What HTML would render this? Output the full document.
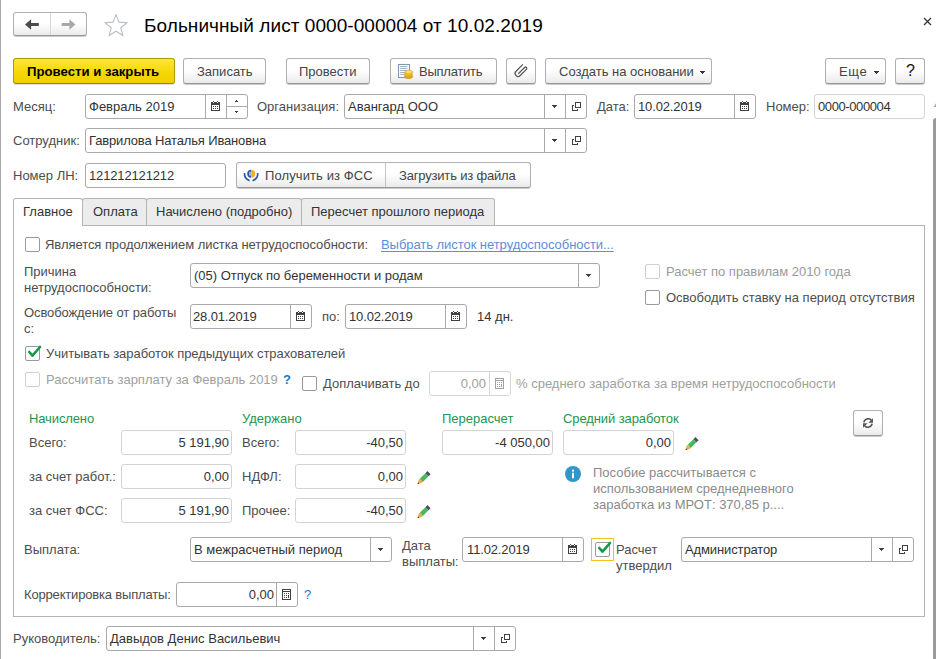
<!DOCTYPE html><html><head><meta charset="utf-8"><style>
html,body{margin:0;padding:0;width:936px;height:659px;overflow:hidden;background:#fff;position:relative}
.t{position:absolute;white-space:pre;font-family:"Liberation Sans",sans-serif}
.b{position:absolute}
</style></head><body>
<div class="b" style="left:0px;top:0px;width:1px;height:659px;background:#a8a8a8"></div>
<div class="b" style="left:933px;top:118px;width:4px;height:545px;background:#9b9b9b;border-radius:3px 0 0 0"></div>
<svg class="b" style="left:930px;top:100px" width="6" height="10"><path d="M6 3.3L3.6 7H6Z" fill="#a8a8a8"/></svg>
<div class="b" style="left:13px;top:12px;width:74px;height:24px;border:1px solid #b0b0b0;border-bottom-color:#969696;border-radius:3px;background:linear-gradient(#fff 45%,#ebebeb);box-shadow:0 1px 0 rgba(0,0,0,0.2);box-sizing:border-box;"></div>
<div class="b" style="left:50px;top:13px;width:1px;height:22px;background:#d6d6d6"></div>
<svg class="b" style="left:25px;top:18px" width="16" height="13" viewBox="0 0 16 13"><path d="M0 6.5L6.1 1.2V5H13.8V8H6.1V11.8Z" fill="#4a4a4a"/></svg>
<svg class="b" style="left:61px;top:18px" width="16" height="13" viewBox="0 0 16 13"><path d="M14.5 6.5L8.4 1.2V5H0.7V8H8.4V11.8Z" fill="#a8a8a8"/></svg>
<svg class="b" style="left:104px;top:14px" width="25" height="24" viewBox="0 0 25 24"><polygon points="12.00,0.60 14.94,8.15 23.03,8.62 16.76,13.75 18.82,21.58 12.00,17.20 5.18,21.58 7.24,13.75 0.97,8.62 9.06,8.15" fill="none" stroke="#b8bec8" stroke-width="1.1" stroke-linejoin="miter"/></svg>
<div class="t" style="left:144px;top:15px;color:#000;font-size:19px;font-weight:normal;line-height:22px;letter-spacing:0.06px">Больничный лист 0000-000004 от 10.02.2019</div>
<svg class="b" style="left:923px;top:17px" width="10" height="10" viewBox="0 0 10 10"><path d="M1 1L8 8M8 1L1 8" stroke="#333" stroke-width="1.25"/></svg>
<div class="b" style="left:13px;top:58px;width:162px;height:26px;border:1px solid #b09a00;border-bottom-color:#9c8600;border-radius:3px;background:linear-gradient(#ffe63c,#f5d600 60%,#f0d000);box-sizing:border-box;box-shadow:0 1px 0 rgba(0,0,0,0.12)"></div>
<div class="t" style="left:27px;top:64px;color:#000;font-size:13px;font-weight:bold;line-height:16px;font-size:13.2px">Провести и закрыть</div>
<div class="b" style="left:183px;top:58px;width:83px;height:26px;border:1px solid #b0b0b0;border-bottom-color:#969696;border-radius:3px;background:linear-gradient(#fff 45%,#ebebeb);box-shadow:0 1px 0 rgba(0,0,0,0.2);box-sizing:border-box;"></div>
<div class="t" style="left:197px;top:64px;color:#444;font-size:13px;font-weight:normal;line-height:16px;">Записать</div>
<div class="b" style="left:286px;top:58px;width:84px;height:26px;border:1px solid #b0b0b0;border-bottom-color:#969696;border-radius:3px;background:linear-gradient(#fff 45%,#ebebeb);box-shadow:0 1px 0 rgba(0,0,0,0.2);box-sizing:border-box;"></div>
<div class="t" style="left:299px;top:64px;color:#444;font-size:13px;font-weight:normal;line-height:16px;">Провести</div>
<div class="b" style="left:390px;top:58px;width:107px;height:26px;border:1px solid #b0b0b0;border-bottom-color:#969696;border-radius:3px;background:linear-gradient(#fff 45%,#ebebeb);box-shadow:0 1px 0 rgba(0,0,0,0.2);box-sizing:border-box;"></div>
<svg class="b" style="left:392px;top:58px" width="28" height="26" viewBox="0 0 28 26"><rect x="6.5" y="6.5" width="11" height="13" fill="#fff" stroke="#8298b2" stroke-width="1.1"/><path d="M8 8.5h7.5M8 10.5h7.5M8 12.5h7.5M8 14.5h5M8 16.5h4" stroke="#9aabbf" stroke-width="0.9"/><ellipse cx="16.6" cy="18.6" rx="4.1" ry="2" fill="#e2a51a" stroke="#c4880c" stroke-width="0.5"/><ellipse cx="16.2" cy="16.4" rx="4.1" ry="2" fill="#efbb2c" stroke="#c99212" stroke-width="0.5"/><ellipse cx="16.8" cy="14.2" rx="4.1" ry="2" fill="#f5c93c" stroke="#cf9a18" stroke-width="0.5"/><ellipse cx="16.6" cy="13.8" rx="3" ry="1.1" fill="#ffe27a"/></svg>
<div class="t" style="left:419px;top:64px;color:#444;font-size:13px;font-weight:normal;line-height:16px;;letter-spacing:-0.25px">Выплатить</div>
<div class="b" style="left:506px;top:58px;width:30px;height:26px;border:1px solid #b0b0b0;border-bottom-color:#969696;border-radius:3px;background:linear-gradient(#fff 45%,#ebebeb);box-shadow:0 1px 0 rgba(0,0,0,0.2);box-sizing:border-box;"></div>
<svg class="b" style="left:510px;top:60px" width="22" height="22" viewBox="0 0 22 22"><g transform="translate(10.75 10.75) rotate(-45)"><path d="M6 -3H-3.7A3 3 0 0 0 -3.7 3H5A1.3 1.3 0 0 0 5 0.4H-3.9" fill="none" stroke="#5a5a5a" stroke-width="1.25"/></g></svg>
<div class="b" style="left:545px;top:58px;width:167px;height:26px;border:1px solid #b0b0b0;border-bottom-color:#969696;border-radius:3px;background:linear-gradient(#fff 45%,#ebebeb);box-shadow:0 1px 0 rgba(0,0,0,0.2);box-sizing:border-box;"></div>
<div class="t" style="left:559px;top:64px;color:#444;font-size:13px;font-weight:normal;line-height:16px;">Создать на основании</div>
<svg class="b" style="left:700px;top:71px" width="5" height="3" shape-rendering="crispEdges"><rect x="0" y="0" width="5" height="1" fill="#333"/><rect x="1" y="1" width="3" height="1" fill="#333"/><rect x="2" y="2" width="1" height="1" fill="#333"/></svg>
<div class="b" style="left:825px;top:58px;width:61px;height:26px;border:1px solid #b0b0b0;border-bottom-color:#969696;border-radius:3px;background:linear-gradient(#fff 45%,#ebebeb);box-shadow:0 1px 0 rgba(0,0,0,0.2);box-sizing:border-box;"></div>
<div class="t" style="left:839px;top:64px;color:#444;font-size:13px;font-weight:normal;line-height:16px;;letter-spacing:0.6px">Еще</div>
<svg class="b" style="left:874px;top:71px" width="5" height="3" shape-rendering="crispEdges"><rect x="0" y="0" width="5" height="1" fill="#333"/><rect x="1" y="1" width="3" height="1" fill="#333"/><rect x="2" y="2" width="1" height="1" fill="#333"/></svg>
<div class="b" style="left:895px;top:58px;width:30px;height:26px;border:1px solid #b0b0b0;border-bottom-color:#969696;border-radius:3px;background:linear-gradient(#fff 45%,#ebebeb);box-shadow:0 1px 0 rgba(0,0,0,0.2);box-sizing:border-box;"></div>
<div class="t" style="left:906px;top:63px;color:#111;font-size:13px;font-weight:normal;line-height:16px;font-size:16px">?</div>
<div class="t" style="left:13px;top:99px;color:#4d4d4d;font-size:13px;font-weight:normal;line-height:16px;">Месяц:</div>
<div class="b" style="left:85px;top:94px;width:163px;height:25px;border:1px solid #a9a9a9;border-radius:3px;background:#fff;box-sizing:border-box"></div>
<div class="b" style="left:205px;top:95px;width:1px;height:23px;background:#a9a9a9"></div>
<div class="b" style="left:226px;top:95px;width:1px;height:23px;background:#a9a9a9"></div>
<div class="b" style="left:227px;top:106px;width:20px;height:1px;background:#a9a9a9"></div>
<div class="t" style="left:89px;top:99px;color:#333;font-size:13px;font-weight:normal;line-height:16px;">Февраль 2019</div>
<svg class="b" style="left:211px;top:101px" width="9" height="10" shape-rendering="crispEdges"><rect x="2" y="0" width="1" height="1" fill="#404040"/><rect x="6" y="0" width="1" height="1" fill="#404040"/><rect x="0" y="1" width="2" height="1" fill="#404040"/><rect x="3" y="1" width="3" height="1" fill="#404040"/><rect x="7" y="1" width="2" height="1" fill="#404040"/><rect x="0" y="2" width="9" height="1" fill="#404040"/><rect x="0" y="3" width="9" height="1" fill="#404040"/><rect x="0" y="4" width="1" height="1" fill="#404040"/><rect x="8" y="4" width="1" height="1" fill="#404040"/><rect x="0" y="5" width="1" height="1" fill="#404040"/><rect x="2" y="5" width="1" height="1" fill="#404040"/><rect x="4" y="5" width="1" height="1" fill="#404040"/><rect x="6" y="5" width="1" height="1" fill="#404040"/><rect x="8" y="5" width="1" height="1" fill="#404040"/><rect x="0" y="6" width="1" height="1" fill="#404040"/><rect x="8" y="6" width="1" height="1" fill="#404040"/><rect x="0" y="7" width="1" height="1" fill="#404040"/><rect x="2" y="7" width="1" height="1" fill="#404040"/><rect x="4" y="7" width="1" height="1" fill="#404040"/><rect x="6" y="7" width="1" height="1" fill="#404040"/><rect x="8" y="7" width="1" height="1" fill="#404040"/><rect x="0" y="8" width="1" height="1" fill="#404040"/><rect x="8" y="8" width="1" height="1" fill="#404040"/><rect x="0" y="9" width="9" height="1" fill="#404040"/></svg>
<svg class="b" style="left:235px;top:100px" width="3" height="2" shape-rendering="crispEdges"><rect x="1" y="0" width="1" height="1" fill="#404040"/><rect x="0" y="1" width="3" height="1" fill="#404040"/></svg>
<svg class="b" style="left:235px;top:111px" width="3" height="2" shape-rendering="crispEdges"><rect x="0" y="0" width="3" height="1" fill="#404040"/><rect x="1" y="1" width="1" height="1" fill="#404040"/></svg>
<div class="t" style="left:257px;top:99px;color:#4d4d4d;font-size:13px;font-weight:normal;line-height:16px;">Организация:</div>
<div class="b" style="left:344px;top:94px;width:243px;height:25px;border:1px solid #a9a9a9;border-radius:3px;background:#fff;box-sizing:border-box"></div>
<div class="b" style="left:544px;top:95px;width:1px;height:23px;background:#a9a9a9"></div>
<div class="b" style="left:565px;top:95px;width:1px;height:23px;background:#a9a9a9"></div>
<div class="t" style="left:348px;top:99px;color:#333;font-size:13px;font-weight:normal;line-height:16px;">Авангард ООО</div>
<svg class="b" style="left:552px;top:105px" width="5" height="3" shape-rendering="crispEdges"><rect x="0" y="0" width="5" height="1" fill="#404040"/><rect x="1" y="1" width="3" height="1" fill="#404040"/><rect x="2" y="2" width="1" height="1" fill="#404040"/></svg>
<svg class="b" style="left:572px;top:102px" width="9" height="9" shape-rendering="crispEdges"><rect x="3" y="0" width="6" height="1" fill="#404040"/><rect x="3" y="1" width="1" height="1" fill="#404040"/><rect x="8" y="1" width="1" height="1" fill="#404040"/><rect x="3" y="2" width="1" height="1" fill="#404040"/><rect x="8" y="2" width="1" height="1" fill="#404040"/><rect x="0" y="3" width="2" height="1" fill="#404040"/><rect x="3" y="3" width="1" height="1" fill="#404040"/><rect x="8" y="3" width="1" height="1" fill="#404040"/><rect x="0" y="4" width="1" height="1" fill="#404040"/><rect x="3" y="4" width="1" height="1" fill="#404040"/><rect x="8" y="4" width="1" height="1" fill="#404040"/><rect x="0" y="5" width="1" height="1" fill="#404040"/><rect x="3" y="5" width="6" height="1" fill="#404040"/><rect x="0" y="6" width="1" height="1" fill="#404040"/><rect x="0" y="7" width="1" height="1" fill="#404040"/><rect x="5" y="7" width="1" height="1" fill="#404040"/><rect x="0" y="8" width="6" height="1" fill="#404040"/></svg>
<div class="t" style="left:597px;top:99px;color:#4d4d4d;font-size:13px;font-weight:normal;line-height:16px;">Дата:</div>
<div class="b" style="left:634px;top:94px;width:122px;height:25px;border:1px solid #a9a9a9;border-radius:3px;background:#fff;box-sizing:border-box"></div>
<div class="b" style="left:734px;top:95px;width:1px;height:23px;background:#a9a9a9"></div>
<div class="t" style="left:638px;top:99px;color:#333;font-size:13px;font-weight:normal;line-height:16px;;letter-spacing:-0.14px">10.02.2019</div>
<svg class="b" style="left:740px;top:101px" width="9" height="10" shape-rendering="crispEdges"><rect x="2" y="0" width="1" height="1" fill="#404040"/><rect x="6" y="0" width="1" height="1" fill="#404040"/><rect x="0" y="1" width="2" height="1" fill="#404040"/><rect x="3" y="1" width="3" height="1" fill="#404040"/><rect x="7" y="1" width="2" height="1" fill="#404040"/><rect x="0" y="2" width="9" height="1" fill="#404040"/><rect x="0" y="3" width="9" height="1" fill="#404040"/><rect x="0" y="4" width="1" height="1" fill="#404040"/><rect x="8" y="4" width="1" height="1" fill="#404040"/><rect x="0" y="5" width="1" height="1" fill="#404040"/><rect x="2" y="5" width="1" height="1" fill="#404040"/><rect x="4" y="5" width="1" height="1" fill="#404040"/><rect x="6" y="5" width="1" height="1" fill="#404040"/><rect x="8" y="5" width="1" height="1" fill="#404040"/><rect x="0" y="6" width="1" height="1" fill="#404040"/><rect x="8" y="6" width="1" height="1" fill="#404040"/><rect x="0" y="7" width="1" height="1" fill="#404040"/><rect x="2" y="7" width="1" height="1" fill="#404040"/><rect x="4" y="7" width="1" height="1" fill="#404040"/><rect x="6" y="7" width="1" height="1" fill="#404040"/><rect x="8" y="7" width="1" height="1" fill="#404040"/><rect x="0" y="8" width="1" height="1" fill="#404040"/><rect x="8" y="8" width="1" height="1" fill="#404040"/><rect x="0" y="9" width="9" height="1" fill="#404040"/></svg>
<div class="t" style="left:766px;top:99px;color:#4d4d4d;font-size:13px;font-weight:normal;line-height:16px;">Номер:</div>
<div class="b" style="left:814px;top:94px;width:111px;height:25px;border:1px solid #d3d3d3;border-radius:3px;background:#fff;box-sizing:border-box"></div>
<div class="t" style="left:818px;top:99px;color:#333;font-size:13px;font-weight:normal;line-height:16px;;letter-spacing:-0.4px">0000-000004</div>
<div class="t" style="left:13px;top:133px;color:#4d4d4d;font-size:13px;font-weight:normal;line-height:16px;">Сотрудник:</div>
<div class="b" style="left:85px;top:128px;width:502px;height:25px;border:1px solid #a9a9a9;border-radius:3px;background:#fff;box-sizing:border-box"></div>
<div class="b" style="left:544px;top:129px;width:1px;height:23px;background:#a9a9a9"></div>
<div class="b" style="left:565px;top:129px;width:1px;height:23px;background:#a9a9a9"></div>
<div class="t" style="left:89px;top:133px;color:#333;font-size:13px;font-weight:normal;line-height:16px;;letter-spacing:-0.15px">Гаврилова Наталья Ивановна</div>
<svg class="b" style="left:552px;top:139px" width="5" height="3" shape-rendering="crispEdges"><rect x="0" y="0" width="5" height="1" fill="#404040"/><rect x="1" y="1" width="3" height="1" fill="#404040"/><rect x="2" y="2" width="1" height="1" fill="#404040"/></svg>
<svg class="b" style="left:572px;top:136px" width="9" height="9" shape-rendering="crispEdges"><rect x="3" y="0" width="6" height="1" fill="#404040"/><rect x="3" y="1" width="1" height="1" fill="#404040"/><rect x="8" y="1" width="1" height="1" fill="#404040"/><rect x="3" y="2" width="1" height="1" fill="#404040"/><rect x="8" y="2" width="1" height="1" fill="#404040"/><rect x="0" y="3" width="2" height="1" fill="#404040"/><rect x="3" y="3" width="1" height="1" fill="#404040"/><rect x="8" y="3" width="1" height="1" fill="#404040"/><rect x="0" y="4" width="1" height="1" fill="#404040"/><rect x="3" y="4" width="1" height="1" fill="#404040"/><rect x="8" y="4" width="1" height="1" fill="#404040"/><rect x="0" y="5" width="1" height="1" fill="#404040"/><rect x="3" y="5" width="6" height="1" fill="#404040"/><rect x="0" y="6" width="1" height="1" fill="#404040"/><rect x="0" y="7" width="1" height="1" fill="#404040"/><rect x="5" y="7" width="1" height="1" fill="#404040"/><rect x="0" y="8" width="6" height="1" fill="#404040"/></svg>
<div class="t" style="left:13px;top:168px;color:#4d4d4d;font-size:13px;font-weight:normal;line-height:16px;">Номер ЛН:</div>
<div class="b" style="left:85px;top:163px;width:141px;height:25px;border:1px solid #a9a9a9;border-radius:3px;background:#fff;box-sizing:border-box"></div>
<div class="t" style="left:89px;top:168px;color:#333;font-size:13px;font-weight:normal;line-height:16px;;letter-spacing:-0.15px">121212121212</div>
<div class="b" style="left:236px;top:162px;width:295px;height:26px;border:1px solid #b0b0b0;border-bottom-color:#969696;border-radius:3px;background:linear-gradient(#fff 45%,#ebebeb);box-shadow:0 1px 0 rgba(0,0,0,0.2);box-sizing:border-box;"></div>
<div class="b" style="left:385px;top:163px;width:1px;height:24px;background:#c4c4c4"></div>
<svg class="b" style="left:240px;top:165px" width="22" height="20" viewBox="0 0 22 20"><path d="M4.6 8A6.6 6.6 0 0 0 9.6 15.6" fill="none" stroke="#2a5aa6" stroke-width="1.7"/><path d="M17.6 8A6.6 6.6 0 0 1 12.6 15.6" fill="none" stroke="#2a5aa6" stroke-width="1.7"/><path d="M11.2 4.8A4 4 0 0 0 11.2 12.8Z" fill="#2a5aa6"/><path d="M11.2 4.8A4 4 0 0 1 11.2 12.8Z" fill="#f6b21c"/><ellipse cx="10" cy="8.8" rx="1" ry="2.3" fill="#a9c2e8"/></svg>
<div class="t" style="left:265px;top:168px;color:#444;font-size:13px;font-weight:normal;line-height:16px;;letter-spacing:0.1px">Получить из ФСС</div>
<div class="t" style="left:399px;top:168px;color:#444;font-size:13px;font-weight:normal;line-height:16px;;letter-spacing:-0.18px">Загрузить из файла</div>
<div class="b" style="left:82px;top:198px;width:65px;height:28px;border:1px solid #b4b4b4;border-bottom:none;border-radius:3px 3px 0 0;background:#ececec;box-sizing:border-box"></div>
<div class="b" style="left:146px;top:198px;width:156px;height:28px;border:1px solid #b4b4b4;border-bottom:none;border-radius:3px 3px 0 0;background:#ececec;box-sizing:border-box"></div>
<div class="b" style="left:301px;top:198px;width:194px;height:28px;border:1px solid #b4b4b4;border-bottom:none;border-radius:3px 3px 0 0;background:#ececec;box-sizing:border-box"></div>
<div class="b" style="left:13px;top:225px;width:912px;height:392px;border:1px solid #b4b4b4;background:#fff;box-sizing:border-box"></div>
<div class="b" style="left:13px;top:198px;width:70px;height:28px;border:1px solid #b4b4b4;border-bottom:none;border-radius:3px 3px 0 0;background:#fff;box-sizing:border-box"></div>
<div class="t" style="left:23px;top:204px;color:#333;font-size:13px;font-weight:normal;line-height:16px;">Главное</div>
<div class="t" style="left:93px;top:204px;color:#333;font-size:13px;font-weight:normal;line-height:16px;">Оплата</div>
<div class="t" style="left:156px;top:204px;color:#333;font-size:13px;font-weight:normal;line-height:16px;">Начислено (подробно)</div>
<div class="t" style="left:311px;top:204px;color:#333;font-size:13px;font-weight:normal;line-height:16px;">Пересчет прошлого периода</div>
<div class="b" style="left:25px;top:237px;width:15px;height:15px;border:1px solid #9a9a9a;border-radius:2px;background:#fff;box-sizing:border-box"></div>
<div class="t" style="left:45px;top:237px;color:#4d4d4d;font-size:13px;font-weight:normal;line-height:16px;;letter-spacing:-0.055px">Является продолжением листка нетрудоспособности:</div>
<div class="t" style="left:381px;top:237px;color:#5b8fd6;font-size:13px;font-weight:normal;line-height:16px;text-decoration:underline;text-underline-offset:2px;text-decoration-skip-ink:none;letter-spacing:-0.054px">Выбрать листок нетрудоспособности...</div>
<div class="t" style="left:24px;top:264px;color:#4d4d4d;font-size:13px;font-weight:normal;line-height:16px;">Причина</div>
<div class="t" style="left:24px;top:280px;color:#4d4d4d;font-size:13px;font-weight:normal;line-height:16px;">нетрудоспособности:</div>
<div class="b" style="left:190px;top:263px;width:410px;height:25px;border:1px solid #a9a9a9;border-radius:3px;background:#fff;box-sizing:border-box"></div>
<div class="b" style="left:578px;top:264px;width:1px;height:23px;background:#a9a9a9"></div>
<div class="t" style="left:194px;top:268px;color:#333;font-size:13px;font-weight:normal;line-height:16px;">(05) Отпуск по беременности и родам</div>
<svg class="b" style="left:586px;top:274px" width="5" height="3" shape-rendering="crispEdges"><rect x="0" y="0" width="5" height="1" fill="#404040"/><rect x="1" y="1" width="3" height="1" fill="#404040"/><rect x="2" y="2" width="1" height="1" fill="#404040"/></svg>
<div class="b" style="left:645px;top:264px;width:15px;height:15px;border:1px solid #d0d0d0;border-radius:2px;background:#fff;box-sizing:border-box"></div>
<div class="t" style="left:666px;top:264px;color:#9a9a9a;font-size:13px;font-weight:normal;line-height:16px;">Расчет по правилам 2010 года</div>
<div class="b" style="left:645px;top:290px;width:15px;height:15px;border:1px solid #9a9a9a;border-radius:2px;background:#fff;box-sizing:border-box"></div>
<div class="t" style="left:666px;top:290px;color:#4d4d4d;font-size:13px;font-weight:normal;line-height:16px;">Освободить ставку на период отсутствия</div>
<div class="t" style="left:24px;top:305px;color:#4d4d4d;font-size:13px;font-weight:normal;line-height:16px;;letter-spacing:-0.11px">Освобождение от работы</div>
<div class="t" style="left:24px;top:321px;color:#4d4d4d;font-size:13px;font-weight:normal;line-height:16px;">с:</div>
<div class="b" style="left:190px;top:304px;width:122px;height:25px;border:1px solid #a9a9a9;border-radius:3px;background:#fff;box-sizing:border-box"></div>
<div class="b" style="left:290px;top:305px;width:1px;height:23px;background:#a9a9a9"></div>
<div class="t" style="left:193px;top:309px;color:#333;font-size:13px;font-weight:normal;line-height:16px;;letter-spacing:-0.14px">28.01.2019</div>
<svg class="b" style="left:296px;top:311px" width="9" height="10" shape-rendering="crispEdges"><rect x="2" y="0" width="1" height="1" fill="#404040"/><rect x="6" y="0" width="1" height="1" fill="#404040"/><rect x="0" y="1" width="2" height="1" fill="#404040"/><rect x="3" y="1" width="3" height="1" fill="#404040"/><rect x="7" y="1" width="2" height="1" fill="#404040"/><rect x="0" y="2" width="9" height="1" fill="#404040"/><rect x="0" y="3" width="9" height="1" fill="#404040"/><rect x="0" y="4" width="1" height="1" fill="#404040"/><rect x="8" y="4" width="1" height="1" fill="#404040"/><rect x="0" y="5" width="1" height="1" fill="#404040"/><rect x="2" y="5" width="1" height="1" fill="#404040"/><rect x="4" y="5" width="1" height="1" fill="#404040"/><rect x="6" y="5" width="1" height="1" fill="#404040"/><rect x="8" y="5" width="1" height="1" fill="#404040"/><rect x="0" y="6" width="1" height="1" fill="#404040"/><rect x="8" y="6" width="1" height="1" fill="#404040"/><rect x="0" y="7" width="1" height="1" fill="#404040"/><rect x="2" y="7" width="1" height="1" fill="#404040"/><rect x="4" y="7" width="1" height="1" fill="#404040"/><rect x="6" y="7" width="1" height="1" fill="#404040"/><rect x="8" y="7" width="1" height="1" fill="#404040"/><rect x="0" y="8" width="1" height="1" fill="#404040"/><rect x="8" y="8" width="1" height="1" fill="#404040"/><rect x="0" y="9" width="9" height="1" fill="#404040"/></svg>
<div class="t" style="left:322px;top:309px;color:#4d4d4d;font-size:13px;font-weight:normal;line-height:16px;">по:</div>
<div class="b" style="left:345px;top:304px;width:122px;height:25px;border:1px solid #a9a9a9;border-radius:3px;background:#fff;box-sizing:border-box"></div>
<div class="b" style="left:445px;top:305px;width:1px;height:23px;background:#a9a9a9"></div>
<div class="t" style="left:349px;top:309px;color:#333;font-size:13px;font-weight:normal;line-height:16px;;letter-spacing:-0.14px">10.02.2019</div>
<svg class="b" style="left:451px;top:311px" width="9" height="10" shape-rendering="crispEdges"><rect x="2" y="0" width="1" height="1" fill="#404040"/><rect x="6" y="0" width="1" height="1" fill="#404040"/><rect x="0" y="1" width="2" height="1" fill="#404040"/><rect x="3" y="1" width="3" height="1" fill="#404040"/><rect x="7" y="1" width="2" height="1" fill="#404040"/><rect x="0" y="2" width="9" height="1" fill="#404040"/><rect x="0" y="3" width="9" height="1" fill="#404040"/><rect x="0" y="4" width="1" height="1" fill="#404040"/><rect x="8" y="4" width="1" height="1" fill="#404040"/><rect x="0" y="5" width="1" height="1" fill="#404040"/><rect x="2" y="5" width="1" height="1" fill="#404040"/><rect x="4" y="5" width="1" height="1" fill="#404040"/><rect x="6" y="5" width="1" height="1" fill="#404040"/><rect x="8" y="5" width="1" height="1" fill="#404040"/><rect x="0" y="6" width="1" height="1" fill="#404040"/><rect x="8" y="6" width="1" height="1" fill="#404040"/><rect x="0" y="7" width="1" height="1" fill="#404040"/><rect x="2" y="7" width="1" height="1" fill="#404040"/><rect x="4" y="7" width="1" height="1" fill="#404040"/><rect x="6" y="7" width="1" height="1" fill="#404040"/><rect x="8" y="7" width="1" height="1" fill="#404040"/><rect x="0" y="8" width="1" height="1" fill="#404040"/><rect x="8" y="8" width="1" height="1" fill="#404040"/><rect x="0" y="9" width="9" height="1" fill="#404040"/></svg>
<div class="t" style="left:477px;top:309px;color:#333;font-size:13px;font-weight:normal;line-height:16px;">14 дн.</div>
<div class="b" style="left:25px;top:346px;width:15px;height:15px;border:1px solid #9a9a9a;border-radius:2px;background:#fff;box-sizing:border-box"></div>
<svg class="b" style="left:25px;top:344px" width="17" height="16" viewBox="0 0 17 16"><path d="M4.3 8L7.5 11.6L15 3" fill="none" stroke="#109a47" stroke-width="2.6" stroke-linecap="round" stroke-linejoin="round"/></svg>
<div class="t" style="left:46px;top:346px;color:#4d4d4d;font-size:13px;font-weight:normal;line-height:16px;;letter-spacing:-0.044px">Учитывать заработок предыдущих страхователей</div>
<div class="b" style="left:25px;top:372px;width:15px;height:15px;border:1px solid #d0d0d0;border-radius:2px;background:#fff;box-sizing:border-box"></div>
<div class="t" style="left:46px;top:372px;color:#a0a0a0;font-size:13px;font-weight:normal;line-height:16px;">Рассчитать зарплату за Февраль 2019</div>
<div class="t" style="left:283px;top:372px;color:#1a78c2;font-size:13px;font-weight:bold;line-height:16px;">?</div>
<div class="b" style="left:302px;top:376px;width:15px;height:15px;border:1px solid #9a9a9a;border-radius:2px;background:#fff;box-sizing:border-box"></div>
<div class="t" style="left:323px;top:376px;color:#4d4d4d;font-size:13px;font-weight:normal;line-height:16px;">Доплачивать до</div>
<div class="b" style="left:429px;top:371px;width:82px;height:25px;border:1px solid #d6d6d6;border-radius:3px;background:#fff;box-sizing:border-box"></div>
<div class="b" style="left:489px;top:372px;width:1px;height:23px;background:#d6d6d6"></div>
<div class="t" style="left:486px;top:376px;color:#a0a0a0;font-size:13px;font-weight:normal;line-height:16px;transform:translateX(-100%)">0,00</div>
<svg class="b" style="left:495px;top:378px" width="9" height="11" shape-rendering="crispEdges"><rect x="0" y="0" width="9" height="1" fill="#a0a0a0"/><rect x="0" y="1" width="1" height="1" fill="#a0a0a0"/><rect x="8" y="1" width="1" height="1" fill="#a0a0a0"/><rect x="0" y="2" width="9" height="1" fill="#a0a0a0"/><rect x="0" y="3" width="1" height="1" fill="#a0a0a0"/><rect x="8" y="3" width="1" height="1" fill="#a0a0a0"/><rect x="0" y="4" width="1" height="1" fill="#a0a0a0"/><rect x="2" y="4" width="1" height="1" fill="#a0a0a0"/><rect x="4" y="4" width="1" height="1" fill="#a0a0a0"/><rect x="6" y="4" width="1" height="1" fill="#a0a0a0"/><rect x="8" y="4" width="1" height="1" fill="#a0a0a0"/><rect x="0" y="5" width="1" height="1" fill="#a0a0a0"/><rect x="8" y="5" width="1" height="1" fill="#a0a0a0"/><rect x="0" y="6" width="1" height="1" fill="#a0a0a0"/><rect x="2" y="6" width="1" height="1" fill="#a0a0a0"/><rect x="4" y="6" width="1" height="1" fill="#a0a0a0"/><rect x="6" y="6" width="1" height="1" fill="#a0a0a0"/><rect x="8" y="6" width="1" height="1" fill="#a0a0a0"/><rect x="0" y="7" width="1" height="1" fill="#a0a0a0"/><rect x="6" y="7" width="1" height="1" fill="#a0a0a0"/><rect x="8" y="7" width="1" height="1" fill="#a0a0a0"/><rect x="0" y="8" width="1" height="1" fill="#a0a0a0"/><rect x="2" y="8" width="1" height="1" fill="#a0a0a0"/><rect x="4" y="8" width="1" height="1" fill="#a0a0a0"/><rect x="6" y="8" width="1" height="1" fill="#a0a0a0"/><rect x="8" y="8" width="1" height="1" fill="#a0a0a0"/><rect x="0" y="9" width="1" height="1" fill="#a0a0a0"/><rect x="8" y="9" width="1" height="1" fill="#a0a0a0"/><rect x="0" y="10" width="9" height="1" fill="#a0a0a0"/></svg>
<div class="t" style="left:516px;top:376px;color:#a0a0a0;font-size:13px;font-weight:normal;line-height:16px;">% среднего заработка за время нетрудоспособности</div>
<div class="t" style="left:29px;top:411px;color:#23964f;font-size:13px;font-weight:normal;line-height:16px;;letter-spacing:-0.12px">Начислено</div>
<div class="t" style="left:242px;top:411px;color:#23964f;font-size:13px;font-weight:normal;line-height:16px;">Удержано</div>
<div class="t" style="left:442px;top:411px;color:#23964f;font-size:13px;font-weight:normal;line-height:16px;">Перерасчет</div>
<div class="t" style="left:563px;top:411px;color:#23964f;font-size:13px;font-weight:normal;line-height:16px;;letter-spacing:-0.1px">Средний заработок</div>
<div class="t" style="left:29px;top:435px;color:#4d4d4d;font-size:13px;font-weight:normal;line-height:16px;">Всего:</div>
<div class="b" style="left:121px;top:430px;width:111px;height:25px;border:1px solid #d3d3d3;border-radius:3px;background:#fff;box-sizing:border-box"></div>
<div class="t" style="left:229px;top:435px;color:#333;font-size:13px;font-weight:normal;line-height:16px;transform:translateX(-100%)">5 191,90</div>
<div class="t" style="left:242px;top:435px;color:#4d4d4d;font-size:13px;font-weight:normal;line-height:16px;">Всего:</div>
<div class="b" style="left:295px;top:430px;width:111px;height:25px;border:1px solid #d3d3d3;border-radius:3px;background:#fff;box-sizing:border-box"></div>
<div class="t" style="left:403px;top:435px;color:#333;font-size:13px;font-weight:normal;line-height:16px;transform:translateX(-100%)">-40,50</div>
<div class="b" style="left:442px;top:430px;width:111px;height:25px;border:1px solid #d3d3d3;border-radius:3px;background:#fff;box-sizing:border-box"></div>
<div class="t" style="left:550px;top:435px;color:#333;font-size:13px;font-weight:normal;line-height:16px;transform:translateX(-100%)">-4 050,00</div>
<div class="b" style="left:563px;top:430px;width:111px;height:25px;border:1px solid #d3d3d3;border-radius:3px;background:#fff;box-sizing:border-box"></div>
<div class="t" style="left:671px;top:435px;color:#333;font-size:13px;font-weight:normal;line-height:16px;transform:translateX(-100%)">0,00</div>
<svg class="b" style="left:684px;top:436px" width="16" height="16" viewBox="0 0 16 16"><g transform="translate(8.1 7.6) rotate(-45)"><path d="M-9.2 0L-5.6 -2.2H-4V2.2H-5.6Z" fill="#f0ae45"/><path d="M-9.2 0L-7.6 -1V1Z" fill="#4a3010"/><rect x="-4" y="-2.2" width="8" height="4.4" fill="#4cb85b"/><rect x="4" y="-2.2" width="3" height="4.4" fill="#485260"/></g></svg>
<div class="b" style="left:853px;top:410px;width:30px;height:26px;border:1px solid #b0b0b0;border-bottom-color:#969696;border-radius:3px;background:linear-gradient(#fff 45%,#ebebeb);box-shadow:0 1px 0 rgba(0,0,0,0.2);box-sizing:border-box;"></div>
<svg class="b" style="left:863px;top:418px" width="10" height="10" viewBox="0 0 10 10"><path d="M0.9 4.3A4.2 4.2 0 0 1 8.3 2.3" fill="none" stroke="#555" stroke-width="1.6"/><path d="M10 0.2V4.8H5.4Z" fill="#555"/><path d="M9.1 5.7A4.2 4.2 0 0 1 1.7 7.7" fill="none" stroke="#555" stroke-width="1.6"/><path d="M0 9.8V5.2H4.6Z" fill="#555"/></svg>
<div class="t" style="left:29px;top:469px;color:#4d4d4d;font-size:13px;font-weight:normal;line-height:16px;">за счет работ.:</div>
<div class="b" style="left:121px;top:464px;width:111px;height:25px;border:1px solid #d3d3d3;border-radius:3px;background:#fff;box-sizing:border-box"></div>
<div class="t" style="left:229px;top:469px;color:#333;font-size:13px;font-weight:normal;line-height:16px;transform:translateX(-100%)">0,00</div>
<div class="t" style="left:242px;top:469px;color:#4d4d4d;font-size:13px;font-weight:normal;line-height:16px;">НДФЛ:</div>
<div class="b" style="left:295px;top:464px;width:111px;height:25px;border:1px solid #d3d3d3;border-radius:3px;background:#fff;box-sizing:border-box"></div>
<div class="t" style="left:403px;top:469px;color:#333;font-size:13px;font-weight:normal;line-height:16px;transform:translateX(-100%)">0,00</div>
<svg class="b" style="left:416px;top:470px" width="16" height="16" viewBox="0 0 16 16"><g transform="translate(8.1 7.6) rotate(-45)"><path d="M-9.2 0L-5.6 -2.2H-4V2.2H-5.6Z" fill="#f0ae45"/><path d="M-9.2 0L-7.6 -1V1Z" fill="#4a3010"/><rect x="-4" y="-2.2" width="8" height="4.4" fill="#4cb85b"/><rect x="4" y="-2.2" width="3" height="4.4" fill="#485260"/></g></svg>
<div class="t" style="left:29px;top:503px;color:#4d4d4d;font-size:13px;font-weight:normal;line-height:16px;">за счет ФСС:</div>
<div class="b" style="left:121px;top:498px;width:111px;height:25px;border:1px solid #d3d3d3;border-radius:3px;background:#fff;box-sizing:border-box"></div>
<div class="t" style="left:229px;top:503px;color:#333;font-size:13px;font-weight:normal;line-height:16px;transform:translateX(-100%)">5 191,90</div>
<div class="t" style="left:242px;top:503px;color:#4d4d4d;font-size:13px;font-weight:normal;line-height:16px;">Прочее:</div>
<div class="b" style="left:295px;top:498px;width:111px;height:25px;border:1px solid #d3d3d3;border-radius:3px;background:#fff;box-sizing:border-box"></div>
<div class="t" style="left:403px;top:503px;color:#333;font-size:13px;font-weight:normal;line-height:16px;transform:translateX(-100%)">-40,50</div>
<svg class="b" style="left:416px;top:504px" width="16" height="16" viewBox="0 0 16 16"><g transform="translate(8.1 7.6) rotate(-45)"><path d="M-9.2 0L-5.6 -2.2H-4V2.2H-5.6Z" fill="#f0ae45"/><path d="M-9.2 0L-7.6 -1V1Z" fill="#4a3010"/><rect x="-4" y="-2.2" width="8" height="4.4" fill="#4cb85b"/><rect x="4" y="-2.2" width="3" height="4.4" fill="#485260"/></g></svg>
<svg class="b" style="left:565px;top:466px" width="16" height="16" viewBox="0 0 16 16"><circle cx="8" cy="8" r="8" fill="#2f97c9"/><rect x="7" y="6.8" width="2" height="5.5" fill="#fff"/><rect x="7" y="3.6" width="2" height="2" fill="#fff"/></svg>
<div class="t" style="left:593px;top:465px;color:#8a8a8a;font-size:13px;font-weight:normal;line-height:16px;">Пособие рассчитывается с</div>
<div class="t" style="left:593px;top:481px;color:#8a8a8a;font-size:13px;font-weight:normal;line-height:16px;">использованием среднедневного</div>
<div class="t" style="left:593px;top:497px;color:#8a8a8a;font-size:13px;font-weight:normal;line-height:16px;">заработка из МРОТ: 370,85 р....</div>
<div class="t" style="left:24px;top:542px;color:#4d4d4d;font-size:13px;font-weight:normal;line-height:16px;">Выплата:</div>
<div class="b" style="left:190px;top:537px;width:202px;height:25px;border:1px solid #a9a9a9;border-radius:3px;background:#fff;box-sizing:border-box"></div>
<div class="b" style="left:370px;top:538px;width:1px;height:23px;background:#a9a9a9"></div>
<div class="t" style="left:194px;top:542px;color:#333;font-size:13px;font-weight:normal;line-height:16px;">В межрасчетный период</div>
<svg class="b" style="left:378px;top:548px" width="5" height="3" shape-rendering="crispEdges"><rect x="0" y="0" width="5" height="1" fill="#404040"/><rect x="1" y="1" width="3" height="1" fill="#404040"/><rect x="2" y="2" width="1" height="1" fill="#404040"/></svg>
<div class="t" style="left:402px;top:538px;color:#4d4d4d;font-size:13px;font-weight:normal;line-height:16px;">Дата</div>
<div class="t" style="left:402px;top:554px;color:#4d4d4d;font-size:13px;font-weight:normal;line-height:16px;">выплаты:</div>
<div class="b" style="left:462px;top:537px;width:122px;height:25px;border:1px solid #a9a9a9;border-radius:3px;background:#fff;box-sizing:border-box"></div>
<div class="b" style="left:562px;top:538px;width:1px;height:23px;background:#a9a9a9"></div>
<div class="t" style="left:467px;top:542px;color:#333;font-size:13px;font-weight:normal;line-height:16px;;letter-spacing:-0.14px">11.02.2019</div>
<svg class="b" style="left:568px;top:544px" width="9" height="10" shape-rendering="crispEdges"><rect x="2" y="0" width="1" height="1" fill="#404040"/><rect x="6" y="0" width="1" height="1" fill="#404040"/><rect x="0" y="1" width="2" height="1" fill="#404040"/><rect x="3" y="1" width="3" height="1" fill="#404040"/><rect x="7" y="1" width="2" height="1" fill="#404040"/><rect x="0" y="2" width="9" height="1" fill="#404040"/><rect x="0" y="3" width="9" height="1" fill="#404040"/><rect x="0" y="4" width="1" height="1" fill="#404040"/><rect x="8" y="4" width="1" height="1" fill="#404040"/><rect x="0" y="5" width="1" height="1" fill="#404040"/><rect x="2" y="5" width="1" height="1" fill="#404040"/><rect x="4" y="5" width="1" height="1" fill="#404040"/><rect x="6" y="5" width="1" height="1" fill="#404040"/><rect x="8" y="5" width="1" height="1" fill="#404040"/><rect x="0" y="6" width="1" height="1" fill="#404040"/><rect x="8" y="6" width="1" height="1" fill="#404040"/><rect x="0" y="7" width="1" height="1" fill="#404040"/><rect x="2" y="7" width="1" height="1" fill="#404040"/><rect x="4" y="7" width="1" height="1" fill="#404040"/><rect x="6" y="7" width="1" height="1" fill="#404040"/><rect x="8" y="7" width="1" height="1" fill="#404040"/><rect x="0" y="8" width="1" height="1" fill="#404040"/><rect x="8" y="8" width="1" height="1" fill="#404040"/><rect x="0" y="9" width="9" height="1" fill="#404040"/></svg>
<div class="b" style="left:591px;top:538px;width:23px;height:23px;border:1px solid #f2c21a;box-sizing:border-box"></div>
<div class="b" style="left:595px;top:542px;width:15px;height:15px;border:1px solid #9a9a9a;border-radius:2px;background:#fff;box-sizing:border-box"></div>
<svg class="b" style="left:595px;top:540px" width="17" height="16" viewBox="0 0 17 16"><path d="M4.3 8L7.5 11.6L15 3" fill="none" stroke="#109a47" stroke-width="2.6" stroke-linecap="round" stroke-linejoin="round"/></svg>
<div class="t" style="left:616px;top:542px;color:#4d4d4d;font-size:13px;font-weight:normal;line-height:16px;">Расчет</div>
<div class="t" style="left:616px;top:558px;color:#4d4d4d;font-size:13px;font-weight:normal;line-height:16px;">утвердил</div>
<div class="b" style="left:681px;top:537px;width:233px;height:25px;border:1px solid #a9a9a9;border-radius:3px;background:#fff;box-sizing:border-box"></div>
<div class="b" style="left:871px;top:538px;width:1px;height:23px;background:#a9a9a9"></div>
<div class="b" style="left:892px;top:538px;width:1px;height:23px;background:#a9a9a9"></div>
<div class="t" style="left:685px;top:542px;color:#333;font-size:13px;font-weight:normal;line-height:16px;;letter-spacing:-0.12px">Администратор</div>
<svg class="b" style="left:879px;top:548px" width="5" height="3" shape-rendering="crispEdges"><rect x="0" y="0" width="5" height="1" fill="#404040"/><rect x="1" y="1" width="3" height="1" fill="#404040"/><rect x="2" y="2" width="1" height="1" fill="#404040"/></svg>
<svg class="b" style="left:899px;top:545px" width="9" height="9" shape-rendering="crispEdges"><rect x="3" y="0" width="6" height="1" fill="#404040"/><rect x="3" y="1" width="1" height="1" fill="#404040"/><rect x="8" y="1" width="1" height="1" fill="#404040"/><rect x="3" y="2" width="1" height="1" fill="#404040"/><rect x="8" y="2" width="1" height="1" fill="#404040"/><rect x="0" y="3" width="2" height="1" fill="#404040"/><rect x="3" y="3" width="1" height="1" fill="#404040"/><rect x="8" y="3" width="1" height="1" fill="#404040"/><rect x="0" y="4" width="1" height="1" fill="#404040"/><rect x="3" y="4" width="1" height="1" fill="#404040"/><rect x="8" y="4" width="1" height="1" fill="#404040"/><rect x="0" y="5" width="1" height="1" fill="#404040"/><rect x="3" y="5" width="6" height="1" fill="#404040"/><rect x="0" y="6" width="1" height="1" fill="#404040"/><rect x="0" y="7" width="1" height="1" fill="#404040"/><rect x="5" y="7" width="1" height="1" fill="#404040"/><rect x="0" y="8" width="6" height="1" fill="#404040"/></svg>
<div class="t" style="left:24px;top:587px;color:#4d4d4d;font-size:13px;font-weight:normal;line-height:16px;;letter-spacing:-0.17px">Корректировка выплаты:</div>
<div class="b" style="left:176px;top:582px;width:122px;height:25px;border:1px solid #a9a9a9;border-radius:3px;background:#fff;box-sizing:border-box"></div>
<div class="b" style="left:276px;top:583px;width:1px;height:23px;background:#a9a9a9"></div>
<div class="t" style="left:274px;top:587px;color:#333;font-size:13px;font-weight:normal;line-height:16px;transform:translateX(-100%)">0,00</div>
<svg class="b" style="left:282px;top:589px" width="9" height="11" shape-rendering="crispEdges"><rect x="0" y="0" width="9" height="1" fill="#404040"/><rect x="0" y="1" width="1" height="1" fill="#404040"/><rect x="8" y="1" width="1" height="1" fill="#404040"/><rect x="0" y="2" width="9" height="1" fill="#404040"/><rect x="0" y="3" width="1" height="1" fill="#404040"/><rect x="8" y="3" width="1" height="1" fill="#404040"/><rect x="0" y="4" width="1" height="1" fill="#404040"/><rect x="2" y="4" width="1" height="1" fill="#404040"/><rect x="4" y="4" width="1" height="1" fill="#404040"/><rect x="6" y="4" width="1" height="1" fill="#404040"/><rect x="8" y="4" width="1" height="1" fill="#404040"/><rect x="0" y="5" width="1" height="1" fill="#404040"/><rect x="8" y="5" width="1" height="1" fill="#404040"/><rect x="0" y="6" width="1" height="1" fill="#404040"/><rect x="2" y="6" width="1" height="1" fill="#404040"/><rect x="4" y="6" width="1" height="1" fill="#404040"/><rect x="6" y="6" width="1" height="1" fill="#404040"/><rect x="8" y="6" width="1" height="1" fill="#404040"/><rect x="0" y="7" width="1" height="1" fill="#404040"/><rect x="6" y="7" width="1" height="1" fill="#404040"/><rect x="8" y="7" width="1" height="1" fill="#404040"/><rect x="0" y="8" width="1" height="1" fill="#404040"/><rect x="2" y="8" width="1" height="1" fill="#404040"/><rect x="4" y="8" width="1" height="1" fill="#404040"/><rect x="6" y="8" width="1" height="1" fill="#404040"/><rect x="8" y="8" width="1" height="1" fill="#404040"/><rect x="0" y="9" width="1" height="1" fill="#404040"/><rect x="8" y="9" width="1" height="1" fill="#404040"/><rect x="0" y="10" width="9" height="1" fill="#404040"/></svg>
<div class="t" style="left:304px;top:587px;color:#1a78c2;font-size:13px;font-weight:normal;line-height:16px;">?</div>
<div class="t" style="left:13px;top:631px;color:#4d4d4d;font-size:13px;font-weight:normal;line-height:16px;">Руководитель:</div>
<div class="b" style="left:106px;top:626px;width:410px;height:25px;border:1px solid #a9a9a9;border-radius:3px;background:#fff;box-sizing:border-box"></div>
<div class="b" style="left:473px;top:627px;width:1px;height:23px;background:#a9a9a9"></div>
<div class="b" style="left:494px;top:627px;width:1px;height:23px;background:#a9a9a9"></div>
<div class="t" style="left:110px;top:631px;color:#333;font-size:13px;font-weight:normal;line-height:16px;">Давыдов Денис Васильевич</div>
<svg class="b" style="left:481px;top:637px" width="5" height="3" shape-rendering="crispEdges"><rect x="0" y="0" width="5" height="1" fill="#404040"/><rect x="1" y="1" width="3" height="1" fill="#404040"/><rect x="2" y="2" width="1" height="1" fill="#404040"/></svg>
<svg class="b" style="left:501px;top:634px" width="9" height="9" shape-rendering="crispEdges"><rect x="3" y="0" width="6" height="1" fill="#404040"/><rect x="3" y="1" width="1" height="1" fill="#404040"/><rect x="8" y="1" width="1" height="1" fill="#404040"/><rect x="3" y="2" width="1" height="1" fill="#404040"/><rect x="8" y="2" width="1" height="1" fill="#404040"/><rect x="0" y="3" width="2" height="1" fill="#404040"/><rect x="3" y="3" width="1" height="1" fill="#404040"/><rect x="8" y="3" width="1" height="1" fill="#404040"/><rect x="0" y="4" width="1" height="1" fill="#404040"/><rect x="3" y="4" width="1" height="1" fill="#404040"/><rect x="8" y="4" width="1" height="1" fill="#404040"/><rect x="0" y="5" width="1" height="1" fill="#404040"/><rect x="3" y="5" width="6" height="1" fill="#404040"/><rect x="0" y="6" width="1" height="1" fill="#404040"/><rect x="0" y="7" width="1" height="1" fill="#404040"/><rect x="5" y="7" width="1" height="1" fill="#404040"/><rect x="0" y="8" width="6" height="1" fill="#404040"/></svg>
</body></html>
